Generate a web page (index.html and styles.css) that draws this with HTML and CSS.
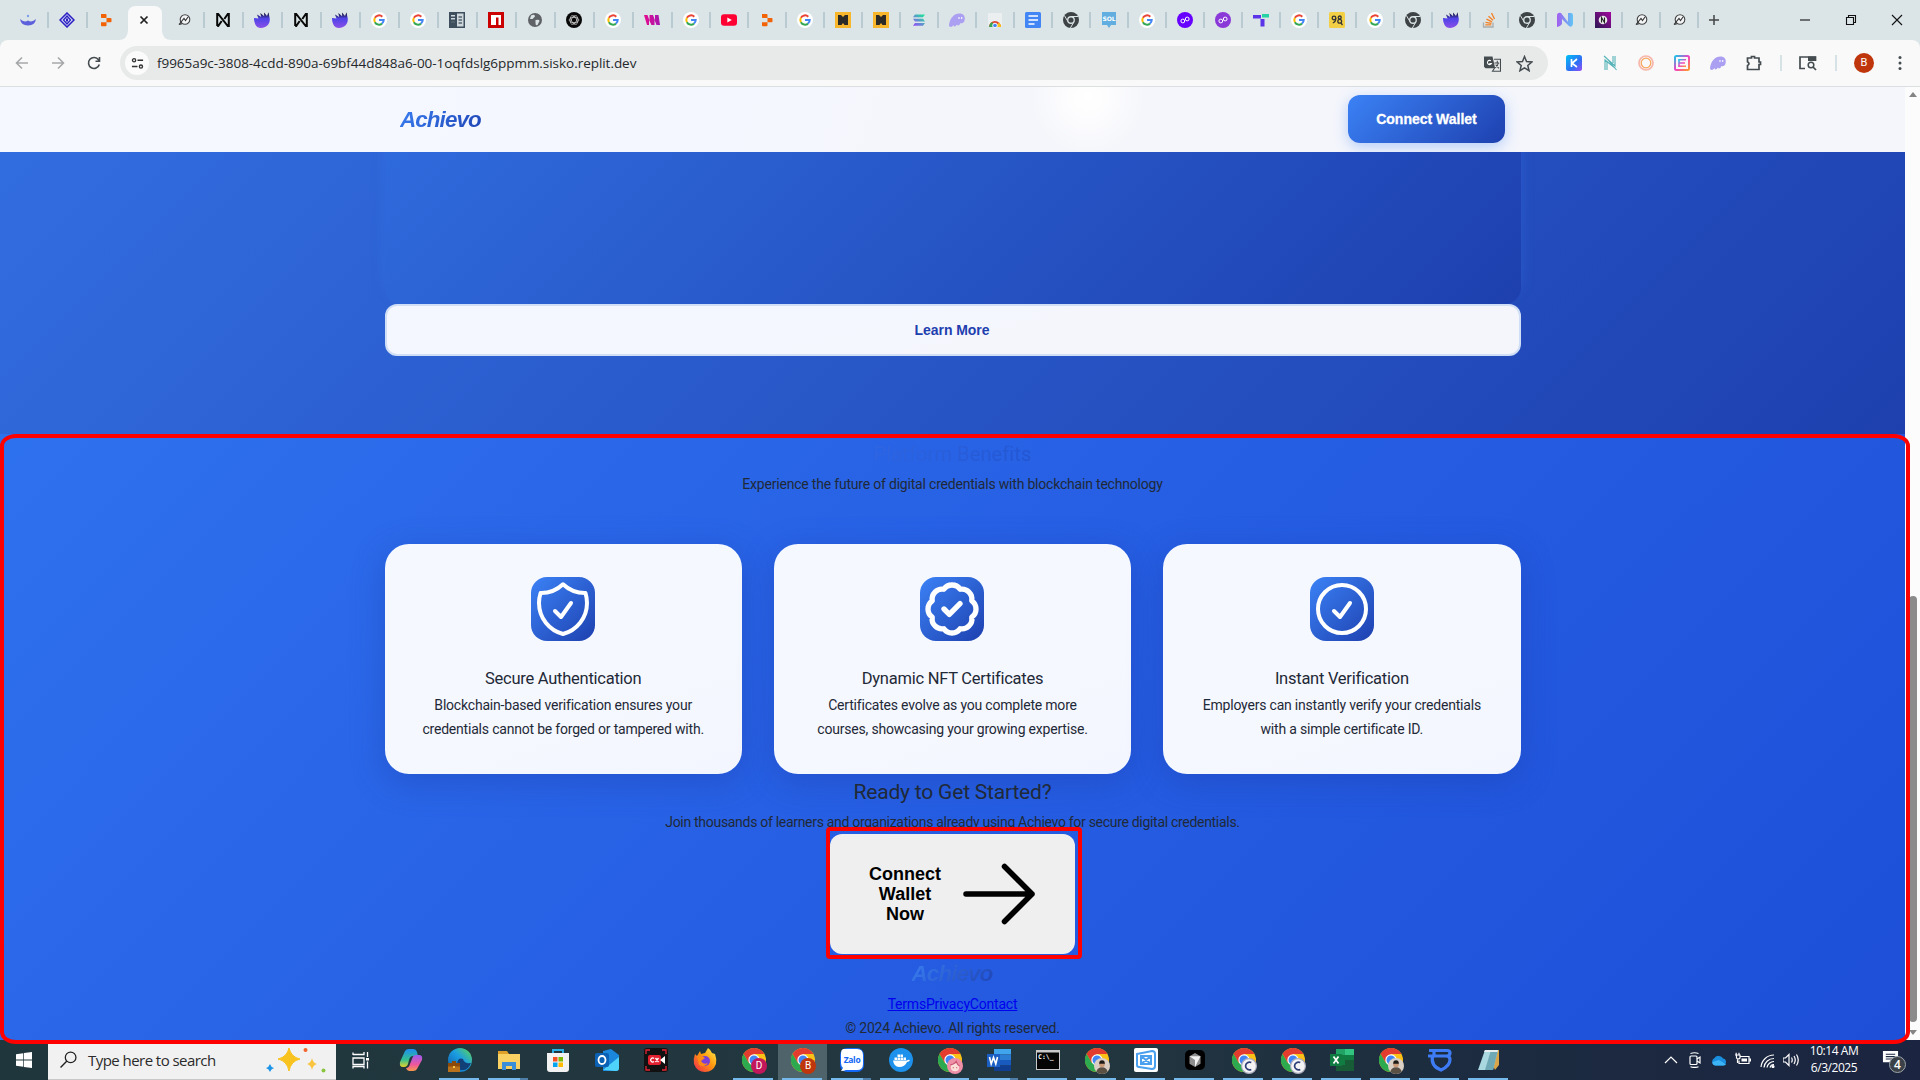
FILE: index.html
```html
<!DOCTYPE html>
<html lang="en">
<head>
<meta charset="utf-8">
<title>Achievo</title>
<link rel="stylesheet" href="styles.css">
</head>
<body>
<svg class="sprite" width="0" height="0" aria-hidden="true">
  <defs>
    <linearGradient id="g-claw" x1="0" y1="0" x2="0" y2="1"><stop offset=".1" stop-color="#1b1648"/><stop offset=".4" stop-color="#4f43e8"/><stop offset="1" stop-color="#8a50e8"/></linearGradient>
    <linearGradient id="g-sol" x1="0" y1="1" x2="1" y2="0"><stop offset="0" stop-color="#9945ff"/><stop offset="1" stop-color="#14f195"/></linearGradient>
    <linearGradient id="g-pink" x1="0" y1="0" x2="1" y2="0"><stop offset="0" stop-color="#e60c8f"/><stop offset="1" stop-color="#a516b0"/></linearGradient>
    <linearGradient id="g-k" x1="0" y1="0" x2="1" y2="1"><stop offset="0" stop-color="#00c2f5"/><stop offset=".6" stop-color="#2f6df5"/><stop offset="1" stop-color="#9a4df5"/></linearGradient>
    <linearGradient id="g-e" x1="0" y1="0" x2="1" y2="1"><stop offset="0" stop-color="#19c7e8"/><stop offset=".5" stop-color="#f23fc5"/><stop offset="1" stop-color="#ff9b2b"/></linearGradient>
    <linearGradient id="g-n" x1="0" y1="0" x2="1" y2="0"><stop offset="0" stop-color="#a35cf0"/><stop offset="1" stop-color="#5fc6f5"/></linearGradient>
    <linearGradient id="g-nb" x1="0" y1="1" x2="1" y2="0"><stop offset="0" stop-color="#2a1850"/><stop offset="1" stop-color="#a3059f"/></linearGradient>
    <linearGradient id="g-cop1" x1="0" y1="0" x2="0" y2="1"><stop offset="0" stop-color="#1d8df0"/><stop offset=".6" stop-color="#35c08e"/><stop offset="1" stop-color="#e8d22b"/></linearGradient>
    <linearGradient id="g-cop2" x1="0" y1="0" x2="0" y2="1"><stop offset="0" stop-color="#9a5cf0"/><stop offset=".6" stop-color="#f0579c"/><stop offset="1" stop-color="#f59a4a"/></linearGradient>
    <linearGradient id="g-edge" x1="0" y1="1" x2="1" y2="0"><stop offset="0" stop-color="#0c59a4"/><stop offset=".55" stop-color="#1b9de2"/><stop offset="1" stop-color="#62d94e"/></linearGradient>
    <linearGradient id="g-fox" x1="1" y1="0" x2="0" y2="1"><stop offset="0" stop-color="#fff44f"/><stop offset=".45" stop-color="#ff980e"/><stop offset="1" stop-color="#f0244f"/></linearGradient>
    <symbol id="i-google" viewBox="0 0 16 16"><circle cx="8" cy="8" r="8" fill="#fff"/><g fill="none" stroke-width="2"><path d="M3.9 5.8A4.7 4.7 0 0 1 11.3 4.7" stroke="#ea4335"/><path d="M3.9 10.2A4.7 4.7 0 0 1 3.9 5.8" stroke="#fbbc05"/><path d="M11 11.6A4.7 4.7 0 0 1 3.9 10.2" stroke="#34a853"/><path d="M8 8h4.7A4.7 4.7 0 0 1 11 11.6" stroke="#4285f4"/></g></symbol>
    <symbol id="i-near" viewBox="0 0 16 16"><path d="M2.2 14V2h1L12.800 14h1V2h-1L9.300 7M2.200 14h1L6.700 9" fill="none" stroke="#080808" stroke-width="2"/></symbol>
    <symbol id="i-claw" viewBox="0 0 16 16"><path d="M0 6L4.500 6.500 3 2.500 7.200 5 6.300 1 10.200 4.300 10 .5 13 4 14.500.3 15.800 7C16 12.500 12 16 7 16 2 16 0 11 0 6z" fill="url(#g-claw)"/></symbol>
    <symbol id="i-replit" viewBox="0 0 16 16"><path fill="#f26207" d="M3 2h4.500q1 0 1 1v3H3.500Q3 6 3 5zM8.500 6H12.500q1 0 1 1v2.500q0 .8-1 .8H8.500zM3 10.300h5.500v3q0 1-1 1H3.800Q3 14.300 3 13.300z"/></symbol>
    <symbol id="i-chrome" viewBox="0 0 16 16"><circle cx="8" cy="8" r="8" fill="#3e4346"/><g stroke="#dbe4e6" stroke-width="1"><path d="M8 4.500h7.200M5 9.700L1.400 3.500M11 9.700L7.400 16" /></g><circle cx="8" cy="8" r="3.900" fill="#dbe4e6"/><circle cx="8" cy="8" r="2.600" fill="#3e4346"/></symbol>
    <symbol id="i-orbit" viewBox="0 0 16 16"><circle cx="9" cy="7.500" r="4.800" fill="#f3f5f6" stroke="#444" stroke-width="1.100"/><path d="M3 12.500L8 6.500l1.500 2L12 5M3 12.500l3-.7" fill="none" stroke="#333" stroke-width="1.100"/></symbol>
    <symbol id="i-poly" viewBox="0 0 16 16"><circle cx="8" cy="8" r="8"/><g fill="none" stroke="#fff"><circle cx="5.800" cy="9" r="1.900"/><circle cx="10.200" cy="7" r="1.900"/></g></symbol>
    <symbol id="i-ghost" viewBox="0 0 16 16"><path d="M0 13C1 6 5 1.500 10.500 1.500 15 1.500 16.500 5 15.500 8.500 15 11 13 11.500 11.500 11 10 14 8.500 14 8 12.500 6.500 15 4.500 15 4.500 13 3 15.500 0 15.500 0 13z" fill="#ab9ff2"/><path d="M10 5v2M12.700 5v2" stroke="#f5f2fc" stroke-width="1.200"/></symbol>
    <symbol id="i-m" viewBox="0 0 16 16"><path fill="#f8b62d" d="M0 0h16v16H0z"/><path fill="#2b2a26" d="M3 3h3l2 2 2-2h3v10h-3.500L8 11l-1.500 2H3z"/></symbol>
    <symbol id="i-chromecolor" viewBox="0 0 24 24"><circle cx="12" cy="12" r="12" fill="#fbc116"/><path d="M1.600 6A12 12 0 0 1 22.400 6H12L6.800 15z" fill="#e33b2e"/><path d="M1.600 6A12 12 0 0 0 12 24l5.200-9H6.800z" fill="#2da94f"/><circle cx="12" cy="12" r="5.700" fill="#fff"/><circle cx="12" cy="12" r="4.500" fill="#4285f4"/></symbol>
  </defs>
</svg>

<div class="screen">
  <div class="tabstrip">
    <div class="tab"><svg viewBox="0 0 16 16"><path d="M0 7q4 4 8 1.500Q12 11 16 7q-1 6.500-8 6.500T0 7z" fill="#5d60dd"/><circle cx="8" cy="4" r="1.200" fill="#7ba0e8"/></svg></div>
    <div class="tab"><svg viewBox="0 0 16 16"><path d="M8 1l7 7-7 7-7-7z" fill="#d7daf8" stroke="#2a1fc0" stroke-width="1.500"/><path d="M8 4l3.500 4L8 12 4.500 8z" fill="none" stroke="#2a1fc0" stroke-width="1.300"/><path d="M8 6.500v3" stroke="#2a1fc0" stroke-width="2"/></svg></div>
    <div class="tab plain"><svg><use href="#i-replit"/></svg></div>
    <div class="tab active"><svg class="tab-shape" viewBox="0 0 54 34"><path d="M0 34q10 0 10-10V8q0-8 8-8h18q8 0 8 8v16q0 10 10 10z" fill="#f9f9f9"/></svg><svg class="close" viewBox="0 0 16 16"><path d="M4.500 4.500l7 7m0-7l-7 7" stroke="#1f1f1f" stroke-width="1.700"/></svg></div>
    <div class="tab"><svg><use href="#i-orbit"/></svg></div>
    <div class="tab"><svg><use href="#i-near"/></svg></div>
    <div class="tab"><svg><use href="#i-claw"/></svg></div>
    <div class="tab"><svg><use href="#i-near"/></svg></div>
    <div class="tab"><svg><use href="#i-claw"/></svg></div>
    <div class="tab"><svg><use href="#i-google"/></svg></div>
    <div class="tab"><svg><use href="#i-google"/></svg></div>
    <div class="tab"><svg viewBox="0 0 16 16"><path fill="#3d4f5c" d="M0 0h16v16H0z"/><path fill="#cfd8dc" d="M8 1.500h6.500v13H8zM2 3h4v1.500H2zM2 6h4v1.500H2z"/><path d="M9.500 5h3.500M9.500 8h3.500M9.500 11h3.500M2 10h4" stroke="#55656f" stroke-width="1.500"/></svg></div>
    <div class="tab"><svg viewBox="0 0 16 16"><path fill="#cb0000" d="M0 0h16v16H0z"/><path fill="#fff" d="M3 3h10v10h-2.500V5.500H8V13H3z"/></svg></div>
    <div class="tab"><svg viewBox="0 0 16 16"><circle cx="8" cy="8" r="7" fill="#5f6368"/><path d="M4 3.500q4-2 4 1L5.500 7H3M8.500 8q4-1 4 1l-2 4q-2 1-2-2z" fill="#dbe4e6"/></svg></div>
    <div class="tab"><svg viewBox="0 0 16 16"><circle cx="8" cy="8" r="8" fill="#080808"/><g fill="none" stroke="#c8c8c8" stroke-width=".8"><ellipse cx="8" cy="8" rx="4.800" ry="2.600"/><ellipse cx="8" cy="8" rx="4.800" ry="2.600" transform="rotate(60 8 8)"/><ellipse cx="8" cy="8" rx="4.800" ry="2.600" transform="rotate(120 8 8)"/></g></svg></div>
    <div class="tab"><svg><use href="#i-google"/></svg></div>
    <div class="tab"><svg viewBox="0 0 16 16"><path d="M0 3h3.500l2 5.500V3H9l2 5.500V3h3.500L16 13h-3.500L10.500 8v5H7.500L5 8v5H3z" fill="url(#g-pink)"/></svg></div>
    <div class="tab late"><svg><use href="#i-google"/></svg></div>
    <div class="tab late"><svg viewBox="0 0 16 16"><rect y="2.300" width="16" height="11.400" rx="3" fill="#ff0033"/><path d="M6.300 5.500v5L10.800 8z" fill="#fff"/></svg></div>
    <div class="tab late"><svg><use href="#i-replit"/></svg></div>
    <div class="tab late"><svg><use href="#i-google"/></svg></div>
    <div class="tab late"><svg><use href="#i-m"/></svg></div>
    <div class="tab late"><svg><use href="#i-m"/></svg></div>
    <div class="tab late"><svg viewBox="0 0 16 16"><path d="M4 2.500h10l-2 2.800H2zM2 6.700h10l2 2.800H4zM4 11h10l-2 2.800H2z" fill="url(#g-sol)"/></svg></div>
    <div class="tab late"><svg><use href="#i-ghost"/></svg></div>
    <div class="tab late"><svg viewBox="0 0 16 16"><path fill="#eceff0" d="M1 1h14v13H1z"/><path d="M2 15a6 6 0 0 1 12 0z" fill="#e0452f"/><path d="M2 15a6 6 0 0 1 3-5l3 5z" fill="#37a852"/><path d="M14 15a6 6 0 0 0-2-4.500L8 15z" fill="#fbc116"/><circle cx="8" cy="13.500" r="2.300" fill="#4285f4" stroke="#fff"/></svg></div>
    <div class="tab late"><svg viewBox="0 0 16 16"><rect width="16" height="16" rx="1.500" fill="#4285f4"/><path d="M3.500 4h9.500M3.500 8h9.500M3.500 12h6" stroke="#fff" stroke-width="1.700"/></svg></div>
    <div class="tab late"><svg><use href="#i-chrome"/></svg></div>
    <div class="tab late"><svg viewBox="0 0 16 16"><path d="M1 0h14v13H10l-2 3-2-3H1z" fill="#62aee0"/><text x="8" y="9" text-anchor="middle" class="sol">SOL</text></svg></div>
    <div class="tab late"><svg><use href="#i-google"/></svg></div>
    <div class="tab late"><svg fill="#6600ff"><use href="#i-poly"/></svg></div>
    <div class="tab late"><svg fill="#8a38d8"><use href="#i-poly"/></svg></div>
    <div class="tab late"><svg viewBox="0 0 16 16"><path d="M0 3h8v3.500H0zM7.500 7h4v7.500h-4z" fill="#5b33e8"/><path d="M9 2h7v3.500H9z" fill="#25d3a4"/></svg></div>
    <div class="tab late"><svg><use href="#i-google"/></svg></div>
    <div class="tab late"><svg viewBox="0 0 16 16"><rect width="16" height="16" rx="1.500" fill="#f2cf45"/><g fill="none" stroke="#333" stroke-width="1.300"><circle cx="5" cy="6" r="1.800"/><path d="M6.800 6q0 4-3 5"/><circle cx="10.700" cy="9.300" r="1.900"/><circle cx="10.700" cy="5.500" r="1.500"/><path d="M12 11l1.500 2"/></g></svg></div>
    <div class="tab late"><svg><use href="#i-google"/></svg></div>
    <div class="tab late"><svg><use href="#i-chrome"/></svg></div>
    <div class="tab late"><svg><use href="#i-claw"/></svg></div>
    <div class="tab late"><svg viewBox="0 0 16 16"><path d="M2.500 10.500V15h9.500v-4.500" fill="none" stroke="#a9acad" stroke-width="1.300"/><path d="M4.300 12.800h6M4.500 10.300l6 1M5.500 7.200l5.500 2.600M7.500 4.200l4.500 4M10.500 1l3 6" stroke="#f48024" stroke-width="1.300"/></svg></div>
    <div class="tab late"><svg><use href="#i-chrome"/></svg></div>
    <div class="tab late"><svg viewBox="0 0 16 16"><path d="M0 15V4q0-4 4-3l7 9V1h3q2 0 2 3v8q-1 4-4 2L5 7v5q-2 3-5 3z" fill="url(#g-n)"/></svg></div>
    <div class="tab late"><svg viewBox="0 0 16 16"><path fill="url(#g-nb)" d="M0 0h16v16H0z"/><circle cx="8" cy="8" r="4.300" fill="#e8e8e8"/><path d="M6.500 10.500v-5l3 5v-5" fill="none" stroke="#222" stroke-width="1.100"/></svg></div>
    <div class="tab late"><svg><use href="#i-orbit"/></svg></div>
    <div class="tab late"><svg><use href="#i-orbit"/></svg></div>
    <div class="newtab"><svg viewBox="0 0 12 12"><path d="M6 1v10M1 6h10" stroke="#444" stroke-width="1.500"/></svg></div>
    <div class="wincontrols">
      <svg viewBox="0 0 12 12"><path d="M1 6h10" stroke="#111" stroke-width="1.100"/></svg>
      <svg viewBox="0 0 12 12"><path d="M1.500 3.500h7v7h-7zM3.500 3.500v-2h7v7h-2" fill="none" stroke="#111" stroke-width="1.100"/></svg>
      <svg viewBox="0 0 12 12"><path d="M1 1l10 10M11 1L1 11" stroke="#111" stroke-width="1.100"/></svg>
    </div>
  </div>

  <div class="toolbar">
    <div class="nav">
      <svg viewBox="0 0 16 16" stroke="#a5a8a9"><path d="M14 8H3M8 2.500L2.500 8 8 13.500"/></svg>
      <svg viewBox="0 0 16 16" stroke="#a5a8a9"><path d="M2 8h11M8 2.500L13.500 8 8 13.500"/></svg>
      <svg viewBox="0 0 16 16" stroke="#444c50"><path d="M13.300 9.500A5.500 5.500 0 1 1 12.500 4.800L13.500 6M13.500 2v4.200H9.500"/></svg>
    </div>
    <div class="omnibox">
      <span class="site"><svg viewBox="0 0 14 14" fill="none" stroke="#333" stroke-width="1.500"><circle cx="3.300" cy="3.500" r="1.700"/><path d="M7 3.500h6M1 10.300h6"/><circle cx="10.700" cy="10.300" r="1.700"/></svg></span>
      <span class="url">f9965a9c-3808-4cdd-890a-69bf44d848a6-00-1oqfdslg6ppmm.sisko.replit.dev</span>
      <span class="omni-actions">
        <svg viewBox="0 0 16 16"><path d="M0 1.500h8l2.500 11H1.500L0 11z" fill="#444c50"/><path d="M9.500 4h6v11.300H8l2-3M12.500 5.500v1.500M9.800 7.500h4.500M13.500 7.500q-.5 3-3 4.500M11 9l3 3.500" fill="none" stroke="#444c50"/><path d="M6.500 5.500A2 2 0 1 0 7 8H5" fill="none" stroke="#fff"/></svg>
        <svg viewBox="0 0 16 16"><path d="M8 1.500l1.900 4.700 5 .4-3.800 3.300 1.200 4.900L8 12.100l-4.300 2.700 1.200-4.900L1.100 6.600l5-.4z" fill="none" stroke="#444c50" stroke-width="1.400"/></svg>
      </span>
    </div>
    <div class="extensions">
      <svg class="ext" viewBox="0 0 16 16"><rect width="16" height="16" rx="2.500" fill="url(#g-k)"/><path d="M5.500 4v8M11 4L6 8.300l5 3.700" fill="none" stroke="#fff" stroke-width="1.700"/></svg>
      <svg class="ext" viewBox="0 0 16 16"><path d="M3 15V5l10 8M13 1v10L2 1M3.500 2l11 13M5 15V7M11 1v7" fill="none" stroke="#56b3b8" stroke-width="1.100"/></svg>
      <svg class="ext" viewBox="0 0 16 16" fill="none"><circle cx="8" cy="8" r="7" stroke="#f7b7ac" stroke-width="1.700"/><circle cx="8" cy="8" r="4.800" stroke="#f7a65b" stroke-width="1.300"/></svg>
      <svg class="ext" viewBox="0 0 16 16" fill="none"><rect x="1" y="1" width="14" height="14" rx="1.500" stroke="url(#g-e)" stroke-width="2"/><path d="M12 4.800H5v6.400h7M5 8h6" stroke="url(#g-e)" stroke-width="1.600"/></svg>
      <svg class="ext"><use href="#i-ghost"/></svg>
      <svg viewBox="0 0 16 16"><path d="M1.500 3h4V1.500h3V3h4.500v4h1.500v2.500H13V14.500H1.500v-4q3-1.800 0-3.700z" fill="none" stroke="#444c50" stroke-width="1.700"/></svg>
      <i></i>
      <svg class="wide" viewBox="0 0 18 16"><path d="M6 13.500H1V2h15.500v4" fill="none" stroke="#444c50" stroke-width="1.700"/><path d="M9 1.500h8V6H9z" fill="#444c50"/><circle cx="12" cy="10" r="2.800" fill="none" stroke="#444c50" stroke-width="1.500"/><path d="M14 12l3 3" stroke="#444c50" stroke-width="1.700"/></svg>
      <i></i>
      <b class="avatar">B</b>
      <svg viewBox="0 0 16 16"><g fill="#444c50"><circle cx="8" cy="2.500" r="1.500"/><circle cx="8" cy="8" r="1.500"/><circle cx="8" cy="13.500" r="1.500"/></g></svg>
    </div>
  </div>

  <div class="viewport">
    <div class="page">
      <header class="site-header">
        <span class="logo">Achievo</span>
        <button class="connect">Connect Wallet</button>
      </header>
      <section class="hero">
        <div class="hero-card"></div>
        <button class="learn">Learn More</button>
      </section>
      <section class="benefits">
        <h2 class="benefits-title">Platform Benefits</h2>
        <p>Experience the future of digital credentials with blockchain technology</p>
        <div class="cards">
          <article class="card">
            <div class="card-icon"><svg viewBox="0 0 24 24" stroke-width="1.500"><path d="M9 12.750 11.250 15 15 9.750m-3-7.036A11.959 11.959 0 0 1 3.598 6 11.990 11.990 0 0 0 3 9.749c0 5.592 3.824 10.290 9 11.623 5.176-1.332 9-6.030 9-11.622 0-1.310-.21-2.571-.598-3.751h-.152c-3.196 0-6.100-1.248-8.250-3.285Z"/></svg></div>
            <h3>Secure Authentication</h3>
            <p>Blockchain-based verification ensures your<br>credentials cannot be forged or tampered with.</p>
          </article>
          <article class="card">
            <div class="card-icon"><svg viewBox="0 0 24 24" stroke-width="2"><path d="M9 12l2 2 4-4M21 12c0 1.268-.63 2.390-1.593 3.068a3.745 3.745 0 0 1-1.043 3.296 3.745 3.745 0 0 1-3.296 1.043A3.745 3.745 0 0 1 12 21c-1.268 0-2.390-.63-3.068-1.593a3.746 3.746 0 0 1-3.296-1.043 3.745 3.745 0 0 1-1.043-3.296A3.745 3.745 0 0 1 3 12c0-1.268.63-2.390 1.593-3.068a3.745 3.745 0 0 1 1.043-3.296 3.746 3.746 0 0 1 3.296-1.043A3.746 3.746 0 0 1 12 3c1.268 0 2.390.63 3.068 1.593a3.746 3.746 0 0 1 3.296 1.043 3.746 3.746 0 0 1 1.043 3.296A3.745 3.745 0 0 1 21 12Z"/></svg></div>
            <h3>Dynamic NFT Certificates</h3>
            <p>Certificates evolve as you complete more<br>courses, showcasing your growing expertise.</p>
          </article>
          <article class="card">
            <div class="card-icon"><svg viewBox="0 0 24 24" stroke-width="1.500"><path d="M9 12.750 11.250 15 15 9.750M21 12a9 9 0 1 1-18 0 9 9 0 0 1 18 0Z"/></svg></div>
            <h3>Instant Verification</h3>
            <p>Employers can instantly verify your credentials<br>with a simple certificate ID.</p>
          </article>
        </div>
        <h2 class="ready">Ready to Get Started?</h2>
        <p class="join">Join thousands of learners and organizations already using Achievo for secure digital credentials.</p>
        <div class="cta-wrap">
          <button class="cta"><span>Connect<br>Wallet<br>Now</span><svg viewBox="0 0 24 24"><path d="M13.500 4.500L21 12m0 0l-7.500 7.500M21 12H3"/></svg></button>
          <div class="mark mark-cta"></div>
        </div>
        <footer>
          <span class="logo">Achievo</span>
          <nav><a href="#">Terms</a><a href="#">Privacy</a><a href="#">Contact</a></nav>
          <p>© 2024 Achievo. All rights reserved.</p>
        </footer>
      </section>
    </div>
    <div class="scrollbar"><i class="up"></i><i class="thumb"></i><i class="down"></i></div>
    <div class="mark mark-page"></div>
  </div>

  <div class="taskbar">
    <div class="start"><svg viewBox="0 0 16 16"><path fill="#fff" d="M0 2.200l7.300-1V7.600H0zM8 1.100L16 0v7.600H8zM0 8.400h7.300v6.400L0 13.800zM8 8.400h8V16l-8-1.100z"/></svg></div>
    <div class="search">
      <svg class="lens" viewBox="0 0 16 16"><circle cx="10" cy="6" r="5" fill="none" stroke="#222" stroke-width="1.200"/><path d="M6.500 9.500L.5 15.500" stroke="#222" stroke-width="1.300"/></svg>
      <span>Type here to search</span>
      <svg class="stars" viewBox="0 0 60 26"><path d="M23 1q2 9 11 11-9 2-11 12-2-10-11-12 9-2 11-11z" fill="#f9c31f" stroke="#f9c31f" stroke-linejoin="round"/><path d="M46 11q1 5 5 6-4 1-5 6-1-5-5-6 4-1 5-6z" fill="#f9c440"/><path d="M4 17q.8 3 4 4-3 1-4 4-1-3-4-4 3-1 4-4z" fill="#1c94e8"/><circle cx="39.500" cy="3" r="2" fill="#f2642b"/><circle cx="57.500" cy="23.500" r="2" fill="#8bc53f"/></svg>
    </div>
    <div class="apps">
      <div class="app first"><svg class="small" viewBox="0 0 18 18" fill="none" stroke="#fff" stroke-width="1.300"><path d="M1 4V1.500M1 3.500h11V1M1 7h11v6.500H1zM1 17.500V15.500h11v2M15.500 1v5M15.500 10.500v7"/><path d="M14 7h3v2.500h-3z" fill="#fff" stroke="none"/></svg></div>
      <div class="app"><svg viewBox="0 0 24 24"><path d="M6 3q1-2 4-2h4q3 0 4 3l1 4h-5q-3 0-4 4l-1 4q-1 3-4 3H4q-4 0-3-5z" fill="url(#g-cop1)"/><path d="M18 21q-1 2-4 2h-4q-2 0-3-3 3 0 4-4l2-5q1-4 4-4h3q4 0 3 5z" fill="url(#g-cop2)"/></svg></div>
      <div class="app run"><svg viewBox="0 0 24 24"><circle cx="12" cy="12" r="12" fill="url(#g-edge)"/><path d="M9 16q1-7 6-5 1 5 8 4-3 8-10 7-4-1-4-6z" fill="#123f78"/><path d="M0 15h12v9H0z" fill="#b9701a"/><path d="M0 15h12v3.500H0zM4 15v-2h4v2" fill="#8b4a0c"/><path d="M5 18h2v2H5z" fill="#f6c445"/></svg></div>
      <div class="app run multi"><svg viewBox="0 0 24 24"><path d="M1 3h9l2 3h11v15H1z" fill="#e0a12a"/><path d="M1 6h22v15H1z" fill="#fad264"/><path d="M5 22v-8h14v8h-4v-4H9v4z" fill="#3b8fd8"/></svg></div>
      <div class="app"><svg viewBox="0 0 24 24"><path d="M7 6V2h10v4" fill="none" stroke="#2bb0e6" stroke-width="2"/><path d="M1 5h22v16q0 3-3 3H4q-3 0-3-3z" fill="#f2f2f2"/><path d="M7 9h4.500v4.500H7z" fill="#f25022"/><path d="M12.500 9H17v4.500h-4.500z" fill="#7fba00"/><path d="M7 14.500h4.500V19H7z" fill="#00a4ef"/><path d="M12.500 14.500H17V19h-4.500z" fill="#ffb900"/></svg></div>
      <div class="app"><svg viewBox="0 0 24 24"><path d="M8 3l8-2 8 6v13q0 3-3 3H8z" fill="#1a86dc"/><path d="M8 22L24 9v11q0 3-3 3z" fill="#50d3fb"/><rect y="5" width="14" height="14" rx="2" fill="#0b62b5"/><ellipse cx="7" cy="12" rx="3.500" ry="4" fill="none" stroke="#fff" stroke-width="1.800"/></svg></div>
      <div class="app"><svg viewBox="0 0 24 24"><rect width="24" height="24" rx="3" fill="#111"/><path d="M2 6V2h4M18 2h4v4M22 18v4h-4M6 22H2v-4" fill="none" stroke="#e32636" stroke-width="1.300"/><rect x="4" y="7" width="13" height="10" rx="2" fill="#e3202f"/><path d="M16 12l5-4v8z" fill="#fff"/><path d="M10 10.500a2 2 0 1 0 0 3M11.500 10l3 4M14.500 10l-3 4" stroke="#fff" stroke-width="1.300" fill="none"/></svg></div>
      <div class="app"><svg viewBox="0 0 24 24"><path d="M2 6l2 2 3-5 1 3 4-1 3-5q3 2 4 5l3 1q2 5 1 10-3 8-11 8T1 16Q0 11 2 6z" fill="url(#g-fox)"/><circle cx="12" cy="13" r="5" fill="#7b3fd8"/><path d="M4 8q5-1 8 2l-4 3q2 4 7 2-3 5-9 2z" fill="#ff8a16"/></svg></div>
      <div class="app run"><svg><use href="#i-chromecolor"/></svg><b class="badge pink">D</b></div>
      <div class="app run current"><svg><use href="#i-chromecolor"/></svg><b class="badge rust">B</b></div>
      <div class="app run multi"><svg viewBox="0 0 24 24"><rect width="24" height="24" rx="7" fill="#1267f5"/><path d="M3 1h14q6 0 6 6v9q0 6-6 6H6q-2 1-5 1l2-3q-2-2-2-5V5q0-3 2-4z" fill="#fff"/><text x="12" y="15" text-anchor="middle" class="zalo">Zalo</text></svg></div>
      <div class="app run"><svg viewBox="0 0 24 24"><circle cx="12" cy="12" r="12" fill="#1d91ec"/><path d="M4 12.500h14q1-1 3-.5-1 2-3 2-2 5-8 5-5 0-6-6.500zM5.500 9.500H8V12H5.500zM8.500 9.500H11V12H8.500zM11.500 9.500H14V12h-2.500zM8.500 6.500H11V9H8.500zM11.500 6.500H14V9h-2.500zM14.500 9.500H17V12h-2.500z" fill="#fff"/></svg></div>
      <div class="app run"><svg><use href="#i-chromecolor"/></svg><b class="badge"><svg viewBox="0 0 14 14"><circle cx="7" cy="7" r="7" fill="#ef8fa8"/><circle cx="7" cy="8" r="3.600" fill="#fbe0da"/><path d="M3 6q4-1 5-3 1 3 3 4M5.500 8v1M8.500 8v1" stroke="#c9506f" fill="none"/></svg></b></div>
      <div class="app run multi"><svg viewBox="0 0 24 24"><path fill="#41a5ee" d="M7 1h17v5.500H7z"/><path fill="#2b7cd3" d="M7 6.500h17V12H7z"/><path fill="#185abd" d="M7 12h17v5.500H7z"/><path fill="#103f91" d="M7 17.500h17V23H7z"/><path fill="#1b5fc4" d="M0 6h13v13H0z"/><path d="M2.500 9l1.700 7 2.300-6.500 2.300 6.500 1.700-7" fill="none" stroke="#fff" stroke-width="1.600"/></svg></div>
      <div class="app run"><svg viewBox="0 0 24 24"><path fill="#c9c9c9" d="M0 2h24v20H0z"/><path fill="#050505" d="M1 4.500h22V21H1z"/><text x="2" y="11" class="cmd">C:\_</text></svg></div>
      <div class="app run"><svg><use href="#i-chromecolor"/></svg><b class="badge"><svg viewBox="0 0 14 14"><circle cx="7" cy="7" r="7" fill="#d9cfc4"/><path d="M2 12q1-4 5-4t5 4q-5 4-10 0z" fill="#5b5044"/><circle cx="7" cy="5.500" r="2.500" fill="#c99a78"/><path d="M4.500 5q0-3 2.500-3t2.500 3z" fill="#1e1a18"/></svg></b></div>
      <div class="app run"><svg viewBox="0 0 24 24"><rect width="24" height="24" rx="2" fill="#fff"/><g fill="none" stroke="#4aa0ee" stroke-width="2"><path d="M3 6l15-3q3 0 3 3v12q0 3-3 3L5 19q-2 0-2-2z"/><path d="M7 8l10 8M17 8L7 16M7 8h10v8H7z"/></g></svg></div>
      <div class="app run"><svg viewBox="0 0 24 24"><rect x="2" y="2" width="20" height="20" rx="5" fill="#000"/><path d="M12 5l5.500 3.300v7.400L12 19l-5.500-3.300V8.300z" fill="#8d8d8d"/><path d="M6.500 8.300h11L12 19V12z" fill="#f2f2f2"/></svg></div>
      <div class="app run"><svg><use href="#i-chromecolor"/></svg><b class="badge"><svg viewBox="0 0 14 14"><circle cx="7" cy="7" r="6.500" fill="#f4f4f4" stroke="#aab" /><path d="M9 4A3.400 3.400 0 1 0 9 10" fill="none" stroke="#2d3e78" stroke-width="1.500"/></svg></b></div>
      <div class="app run"><svg><use href="#i-chromecolor"/></svg><b class="badge"><svg viewBox="0 0 14 14"><circle cx="7" cy="7" r="6.500" fill="#f4f4f4" stroke="#aab"/><path d="M9 4A3.400 3.400 0 1 0 9 10" fill="none" stroke="#2d3e78" stroke-width="1.500"/></svg></b></div>
      <div class="app run"><svg viewBox="0 0 24 24"><path fill="#21a366" d="M6 1h9v6H6z"/><path fill="#33c481" d="M15 1h9v6h-9z"/><path fill="#107c41" d="M6 7h9v10H6zM15 7h9v5h-9z"/><path fill="#185c37" d="M6 17h18v6H6zM15 12h9v5h-9z"/><path fill="#107c41" d="M0 6h12v12H0z"/><path d="M3.500 8.500l5 7M8.500 8.500l-5 7" stroke="#fff" stroke-width="1.700"/></svg></div>
      <div class="app run"><svg><use href="#i-chromecolor"/></svg><b class="badge"><svg viewBox="0 0 14 14"><circle cx="7" cy="7" r="7" fill="#d9cfc4"/><path d="M2 12q1-4 5-4t5 4q-5 4-10 0z" fill="#5b5044"/><circle cx="7" cy="5.500" r="2.500" fill="#c99a78"/><path d="M4.500 5q0-3 2.500-3t2.500 3z" fill="#1e1a18"/></svg></b></div>
      <div class="app run"><svg viewBox="0 0 24 24" fill="none" stroke="#3e7cf6" stroke-width="3.200"><path d="M1 2.500h18q3 0 3 2.500t-3 3H0M4.500 8q-2 10 8.500 14 9-4 9-10.500Q22 8 18 8M6 3v5"/></svg></div>
      <div class="app run"><svg viewBox="0 0 24 24"><path d="M9 2h13v15l-4 5z" fill="#d8a548"/><path d="M8 2h13l-5 20H1z" fill="#a9d8e0"/><path d="M14 2h7l-5 20H8z" fill="#6fa9b5"/><path d="M8 2h13l-.5 2H7z" fill="#e7eef0"/></svg></div>
    </div>
    <div class="tray">
      <svg viewBox="0 0 16 16"><path d="M2 11l6-6 6 6"/></svg>
      <svg viewBox="0 0 16 16"><rect x="3" y="4" width="7" height="8.500" rx="1"/><path d="M10 7l3-2v6l-3-2M3.500 1.500q4-1.500 8 0M3.500 14.700q4 1.500 8 0"/></svg>
      <svg viewBox="0 0 16 16"><path d="M4 13.500a4 4 0 0 1-.5-7.500A5 5 0 0 1 12 6.500a3.600 3.600 0 0 1 .5 7z" fill="#1a8fe0" stroke="none"/><path d="M4 13.500q-3-1-2.500-3.500L8 8l7 4.500q-1 1-2.500 1z" fill="#3db4f5" stroke="none"/></svg>
      <svg viewBox="0 0 16 16"><path d="M5 4.500h9v7H4v-3M14 7h1.500v2H14M0 3h5v3q-2 2-3.500 0V3M1.200 3V.8M4 3V.8M2.500 7.500V11"/><path d="M6.500 6.500h5.500v3H6.500z" fill="#fff" stroke="none"/></svg>
      <svg viewBox="0 0 16 16"><path d="M2 15A13 13 0 0 1 15 3M5 15.500A10 10 0 0 1 15 6.500M8 15.500A7 7 0 0 1 15 9.500M11 15.500A4 4 0 0 1 15 12.500"/><circle cx="14" cy="14.500" r="1" fill="#fff"/></svg>
      <svg viewBox="0 0 16 16"><path d="M0 6h2.500L6 2.500v11L2.500 10H0zM8.500 5.500q1.500 2.500 0 5M11 4q2.500 4 0 8M13.500 2.500q3.500 5.500 0 11"/></svg>
      <div class="clock"><span>10:14 AM</span><span>6/3/2025</span></div>
      <div class="notif"><svg viewBox="0 0 18 18"><path d="M1 1h16v12h-3v4l-4-4H1z" fill="#fff" stroke="none"/><path d="M4 4.500h10M4 7h10M4 9.500h7" stroke="#1c2a42"/></svg><b>4</b></div>
    </div>
  </div>
</div>
</body>
</html>
```

FILE: styles.css
```css
* { box-sizing: border-box; }
body, h2, h3, p { margin: 0; font-weight: 400; }
button { border: 0; font-family: "Liberation Sans", sans-serif; font-weight: 700; }
svg { display: block; flex: none; }
.sprite { position: absolute; }
.screen { width: 1920px; height: 1080px; display: flex; flex-direction: column; overflow: hidden; background: #dbe4e6; font-family: Roboto, sans-serif; }

/* browser tabs */
.tabstrip { height: 40px; display: flex; padding-left: 8.5px; }
.tab { width: 39px; display: flex; align-items: center; justify-content: center; position: relative; flex: none; }
.tab.late { width: 38px; }
.tab svg { width: 16px; height: 16px; }
.tab::after { content: ""; position: absolute; right: -1px; top: 12px; width: 2px; height: 16px; background: #b9cbd0; }
.tab.plain::after, .tab.active::after { display: none; }
.tab svg.tab-shape { position: absolute; left: -8px; top: 6px; width: 54px; height: 34px; }
.tab .close { position: relative; left: -1px; }
.sol { font: 700 6px "DejaVu Sans", sans-serif; fill: #fff; }
.newtab { width: 33px; display: flex; align-items: center; justify-content: center; }
.newtab svg { width: 12px; height: 12px; }
.wincontrols { margin-left: auto; display: flex; align-items: center; gap: 34px; padding-right: 17px; }
.wincontrols svg { width: 12px; height: 12px; }

/* toolbar */
.toolbar { height: 47px; background: #f9f9f9; border-bottom: 1px solid #dcdfe0; display: flex; align-items: center; border-radius: 8px 8px 0 0; }
.nav { width: 120px; display: flex; gap: 20px; padding-left: 14px; }
.nav svg { width: 16px; height: 16px; fill: none; stroke-width: 1.600px; }
.omnibox { width: 1428px; height: 34px; border-radius: 17px; background: #e8eaea; display: flex; align-items: center; padding: 0 15px 0 5px; }
.site { width: 24px; height: 24px; border-radius: 50%; background: #fbfbfb; display: flex; align-items: center; justify-content: center; }
.site svg { width: 13px; height: 13px; }
.url { margin-left: 8px; font: 13.500px "Open Sans", sans-serif; letter-spacing: -.04px; color: #24282a; white-space: nowrap; }
.omni-actions { margin-left: auto; display: flex; gap: 15px; }
.omni-actions svg { width: 17px; height: 17px; }
.extensions { display: flex; align-items: center; gap: 17.5px; margin-left: 18px; }
.extensions svg { width: 16px; height: 16px; }
.extensions svg.ext { margin-right: 2.5px; }
.extensions svg.wide { width: 18px; }
.extensions i { width: 2px; height: 16px; background: #d5e3e6; }
.avatar { width: 20px; height: 20px; border-radius: 50%; background: #bf360c; color: #fff; font-size: 11px; font-weight: 400; text-align: center; line-height: 20px; }

/* page */
.viewport { height: 953px; display: flex; position: relative; z-index: 1; }
.page { width: 1905px; display: flex; flex-direction: column; color: #1f2937; }
.site-header { height: 65px; display: flex; align-items: center; justify-content: space-between; padding: 0 400px 0 400px; background: radial-gradient(circle at 1088px 10px, #fff 0, rgba(255,255,255,.8) 18px, rgba(255,255,255,0) 58px), linear-gradient(110deg, #f5f8ff 0, #f4f7ff 38%, #f5f6fb 50%, #f4f6fc 100%); }
.logo { font: italic 700 22.400px/38px "Liberation Sans", sans-serif; letter-spacing: -.9px; padding-right: 1px; background: linear-gradient(135deg, #3b82f6, #1e40af); -webkit-background-clip: text; background-clip: text; color: transparent; }
.connect { width: 157px; height: 48px; margin-bottom: 1px; border-radius: 12px; background: linear-gradient(135deg, #3b82f6, #1e40af); color: #fff; font-size: 14px; -webkit-text-stroke: .3px #fff; box-shadow: 0 4px 14px rgba(59,130,246,.35); }
.hero { height: 282px; padding: 0 384px 0 385px; background: linear-gradient(135deg, #3b82f6, #1e40af) bottom / 100% 1300px no-repeat; display: flex; flex-direction: column; overflow: hidden; }
.hero-card { height: 152px; border-radius: 0 0 16px 16px; background: linear-gradient(135deg, #3272e4, #1e40af) bottom / 100% 400px no-repeat; box-shadow: 0 -10px 14px rgba(59,130,246,.3); }
.learn { height: 52px; border: 2px solid #d0def6; border-radius: 12px; background: linear-gradient(165deg, #f4f7ff 40%, #f4f6fb 60%); color: #1e40af; font-size: 14px; letter-spacing: -.05px; padding-right: 8px; }
.benefits { height: 606px; background: linear-gradient(135deg, #2e71ee 0, #2760e4 45%, #1d4fd8 100%); display: flex; flex-direction: column; align-items: center; text-align: center; font-size: 14px; line-height: 24px; letter-spacing: -.2px; white-space: nowrap; }
.benefits-title { font-size: 20px; line-height: 40px; height: 38px; letter-spacing: .1px; background: linear-gradient(135deg, #3067e2, #2254cf); -webkit-background-clip: text; background-clip: text; color: transparent; }
.cards { display: grid; grid-template-columns: repeat(3, 1fr); gap: 32px; width: 1136px; margin-top: 48px; }
.card { height: 230px; border-radius: 24px; background: linear-gradient(160deg, #f5f8ff 60%, #f3f6fe); padding-top: 33px; display: flex; flex-direction: column; align-items: center; box-shadow: 0 8px 32px rgba(30,64,175,.45); }
.card-icon { width: 64px; height: 64px; border-radius: 16px; background: linear-gradient(135deg, #3b82f6, #1e40af); margin-bottom: 24px; }
.card-icon svg { width: 64px; height: 64px; fill: none; stroke: #fff; stroke-linecap: round; stroke-linejoin: round; }
.card h3 { font-size: 16.500px; line-height: 27px; height: 28px; letter-spacing: -.25px; }
.ready { font-size: 21px; line-height: 36px; letter-spacing: -.2px; position: relative; }
.join { position: relative; letter-spacing: -.3px; }
.cta-wrap { position: relative; width: 245px; height: 120px; }
.cta { width: 245px; height: 120px; border-radius: 12px; background: #efefef; color: #000; font-size: 18px; line-height: 20px; letter-spacing: 0; display: flex; align-items: center; justify-content: center; gap: 14px; padding: 0 0 0 7px; }
.cta svg { width: 88px; height: 88px; fill: none; stroke: #000; stroke-width: 1.500px; stroke-linecap: round; stroke-linejoin: round; }
.mark { position: absolute; border: 4px solid #f00; }
.mark-cta { left: -4px; top: -7px; width: 256px; height: 132px; border-radius: 4px; }
.mark-page { left: 0; top: 347px; width: 1910px; height: 610px; border-radius: 16px / 12px; }
footer { display: flex; flex-direction: column; align-items: center; }
footer .logo { padding-top: 1px; margin-bottom: -1px; }
footer nav { height: 24px; }
footer a { color: #00e; }
.scrollbar { width: 15px; background: #fcfcfc; display: flex; flex-direction: column; align-items: center; padding: 5px 0; }
.up, .down { border: 4.500px solid transparent; }
.up { border-top: 0; border-bottom: 5px solid #858585; }
.down { border-bottom: 0; border-top: 5px solid #858585; margin-top: auto; }
.thumb { width: 8px; height: 426px; margin-top: 499px; border-radius: 4px; background: #8b8b8b; }

/* taskbar */
.taskbar { height: 40px; background: linear-gradient(90deg, #20363d 0, #22373f 55%, #1c2b40 78%, #1b2440 100%); display: flex; color: #fff; font-family: "Open Sans", sans-serif; }
.start { width: 48px; display: flex; align-items: center; justify-content: center; }
.start svg { width: 16px; height: 16px; }
.search { width: 288px; background: #f1f1f1; border-bottom: 1px solid #c8c8c8; display: flex; align-items: center; padding: 0 10px 0 12px; color: #2b2b2b; font-size: 15px; letter-spacing: -.55px; }
.lens { width: 17px; height: 17px; margin-right: 11px; }
.stars { width: 60px; height: 26px; margin-left: auto; }
.apps { display: flex; }
.app { width: 49px; display: flex; align-items: center; justify-content: center; position: relative; }
.app.first { width: 50px; }
.app > svg { width: 24px; height: 24px; }
.app > svg.small { width: 18px; height: 18px; }
.app.run::after { content: ""; position: absolute; left: 4px; bottom: 0; width: 40px; height: 2px; background: #76b9ed; }
.app.multi::after { background: linear-gradient(90deg, #76b9ed 32px, #4f7fa8 32px); }
.app.current { background: #4e636a; }
.badge { position: absolute; left: 22px; top: 18px; width: 16px; height: 16px; border-radius: 50%; font-size: 10px; line-height: 16px; font-weight: 400; text-align: center; font-family: Roboto, sans-serif; }
.badge svg { width: 16px; height: 16px; }
.pink { background: #c2185b; }
.rust { background: #bf360c; }
.zalo { font: 700 8.500px "Open Sans", sans-serif; fill: #1267f5; letter-spacing: -.3px; }
.cmd { font: 700 6.500px "DejaVu Sans Mono", monospace; fill: #fff; }
.tray { margin-left: auto; display: flex; align-items: center; padding-right: 13px; }
.tray svg { width: 16px; height: 16px; margin-right: 8px; fill: none; stroke: #fff; stroke-width: 1.200px; }
.clock { width: 64px; margin: 0 11px 0 -5px; display: flex; flex-direction: column; text-align: center; font-size: 12px; line-height: 17px; letter-spacing: -.45px; white-space: nowrap; padding-bottom: 2px; }
.notif { position: relative; width: 30px; height: 24px; }
.notif svg { width: 17px; height: 17px; margin: 2px 0 0 5px; }
.notif b { position: absolute; left: 12px; top: 8px; width: 17px; height: 17px; border-radius: 50%; background: #3a4148; border: 1px solid #9ea5ab; font-size: 12px; line-height: 15px; text-align: center; font-weight: 600; }
```
